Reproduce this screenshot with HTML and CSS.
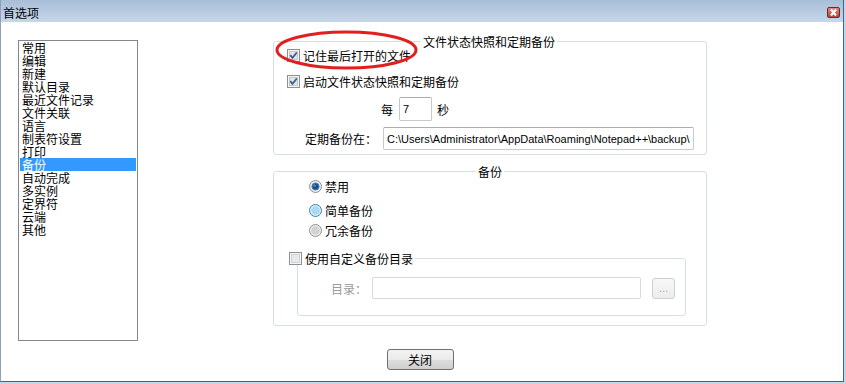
FILE: index.html
```html
<!DOCTYPE html>
<html lang="zh-CN">
<head>
    <meta charset="UTF-8">
    <title>首选项</title>
    <link rel="stylesheet" href="styles.css">
</head>
<body>
    <div class="window">
        <div class="titlebar">
            <span class="title">首选项</span>
            <span class="close-btn">
                <svg width="11" height="9" viewBox="0 0 11 9"><path d="M3 1.5 L8 7.5 M8 1.5 L3 7.5" stroke="#fff" stroke-width="2" fill="none"/></svg>
            </span>
        </div>
        <div class="client">
            <div class="content">
                <ul class="pref-list">
                    <li>常用</li>
                    <li>编辑</li>
                    <li>新建</li>
                    <li>默认目录</li>
                    <li>最近文件记录</li>
                    <li>文件关联</li>
                    <li>语言</li>
                    <li>制表符设置</li>
                    <li>打印</li>
                    <li class="selected">备份</li>
                    <li>自动完成</li>
                    <li>多实例</li>
                    <li>定界符</li>
                    <li>云端</li>
                    <li>其他</li>
                </ul>
                <div class="panels">
                    <fieldset class="group snapshot">
                        <legend>文件状态快照和定期备份</legend>
                        <label class="check-row first">
                            <svg class="box" width="13" height="13" viewBox="0 0 13 13"><rect x="0.5" y="0.5" width="12" height="12" fill="#f6f6f6" stroke="#8e8f8f"/><rect x="2.5" y="2.5" width="8" height="8" fill="#e2e6eb" stroke="#c3c7cc"/><path d="M3.3 6.2 L5.5 8.8 L9.8 3.5" fill="none" stroke="#3f5a8e" stroke-width="1.8"/></svg>
                            <span>记住最后打开的文件</span>
                        </label>
                        <label class="check-row second">
                            <svg class="box" width="13" height="13" viewBox="0 0 13 13"><rect x="0.5" y="0.5" width="12" height="12" fill="#f6f6f6" stroke="#8e8f8f"/><rect x="2.5" y="2.5" width="8" height="8" fill="#e2e6eb" stroke="#c3c7cc"/><path d="M3.3 6.2 L5.5 8.8 L9.8 3.5" fill="none" stroke="#3f5a8e" stroke-width="1.8"/></svg>
                            <span>启动文件状态快照和定期备份</span>
                        </label>
                        <div class="interval-row">
                            <span>每</span>
                            <input class="textbox interval" type="text" value="7">
                            <span>秒</span>
                        </div>
                        <div class="path-row">
                            <span class="path-label">定期备份在：</span>
                            <input class="textbox path" type="text" value="C:\Users\Administrator\AppData\Roaming\Notepad++\backup\">
                        </div>
                    </fieldset>

                    <fieldset class="group backup">
                        <legend>备份</legend>
                        <label class="radio-row r1">
                            <svg width="13" height="13" viewBox="0 0 13 13"><circle cx="6.5" cy="6.5" r="6" fill="#eceef0" stroke="#8e8f8f"/><circle cx="6.5" cy="6.5" r="3.6" fill="#1d4f86" stroke="#4f86bd" stroke-width="1"/><circle cx="5.6" cy="5.5" r="1.2" fill="#5d8fc4"/></svg>
                            <span>禁用</span>
                        </label>
                        <label class="radio-row r2">
                            <svg width="13" height="13" viewBox="0 0 13 13"><circle cx="6.5" cy="6.5" r="6" fill="#d9f0fc" stroke="#3c7fb1"/><circle cx="6.5" cy="6.5" r="4.3" fill="#a9d9f4"/></svg>
                            <span>简单备份</span>
                        </label>
                        <label class="radio-row r3">
                            <svg width="13" height="13" viewBox="0 0 13 13"><circle cx="6.5" cy="6.5" r="6" fill="#eeeeee" stroke="#8e8f8f"/><circle cx="6.5" cy="6.5" r="4.3" fill="#d2d2d2"/></svg>
                            <span>冗余备份</span>
                        </label>
                        <fieldset class="custom-dir">
                            <legend>
                                <label class="check-row">
                                    <svg class="box" width="13" height="13" viewBox="0 0 13 13"><rect x="0.5" y="0.5" width="12" height="12" fill="#f6f6f6" stroke="#8e8f8f"/><rect x="2.5" y="2.5" width="8" height="8" fill="#e6e8eb" stroke="#d0d3d6"/></svg>
                                    <span>使用自定义备份目录</span>
                                </label>
                            </legend>
                            <div class="dir-row">
                                <span class="dir-label">目录：</span>
                                <input class="textbox dir" type="text" value="" disabled>
                                <span class="browse-btn">…</span>
                            </div>
                        </fieldset>
                    </fieldset>
                </div>
            </div>
            <div class="footer">
                <button type="button" class="close-button">关闭</button>
            </div>
        </div>
        <svg class="annotation" width="146" height="41" viewBox="0 0 146 41">
            <ellipse cx="72.5" cy="20" rx="69.5" ry="18" fill="none" stroke="#e11f1f" stroke-width="3"/>
        </svg>
    </div>
</body>
</html>
```

FILE: styles.css
```css
* {
    box-sizing: border-box;
}
html, body {
    margin: 0;
}
body {
    width: 846px;
    height: 384px;
    overflow: hidden;
    background: #c2d6ec;
    font-family: "Noto Sans CJK SC", "Liberation Sans", sans-serif;
    font-size: 12px;
    line-height: 13px;
    color: #000;
}
.window {
    position: relative;
    width: 844px;
    height: 382px;
    display: flex;
    flex-direction: column;
    background: #fff;
    border-left: 1px solid #8fa1b8;
    border-right: 1px solid #3b6a86;
    border-bottom: 1px solid #3b6a86;
}
.titlebar {
    height: 22px;
    flex: none;
    display: flex;
    align-items: flex-start;
    justify-content: space-between;
    padding: 3px 3px 0 2px;
    background: linear-gradient(#a8bdd7, #c7d7ea);
}
.title {
    line-height: 19px;
}
.close-btn {
    margin-top: 4px;
    width: 13px;
    height: 11px;
    display: flex;
    align-items: center;
    justify-content: center;
    border: 1px solid #6d2a24;
    border-radius: 2px;
    background: linear-gradient(#dc8d84, #b5473d);
}
.client {
    flex: 1;
    display: flex;
    flex-direction: column;
}
.content {
    display: flex;
    align-items: flex-start;
    padding-left: 17px;
}
.pref-list {
    margin: 18px 0 0;
    padding: 0 1px;
    width: 120px;
    height: 301px;
    border: 1px solid #828790;
    list-style: none;
}
.pref-list li {
    height: 13px;
    padding-left: 2px;
    white-space: nowrap;
}
.pref-list li.selected {
    background: #3399ff;
    color: #fff;
}
.panels {
    margin: 13px 0 0 135px;
    display: flex;
    flex-direction: column;
}
.group {
    margin: 0;
    padding: 0 0 0 13px;
    width: 434px;
    min-width: 0;
    border: 1px solid #d5dfe5;
    border-radius: 3px;
}
.group legend {
    padding: 0 2px;
    line-height: 13px;
}
.snapshot {
    height: 120px;
}
.snapshot legend {
    margin-left: 134px;
}
.backup {
    margin-top: 10px;
    height: 161px;
}
.backup > legend {
    margin-left: 189px;
}
.check-row, .radio-row {
    display: flex;
    align-items: center;
    height: 13px;
    white-space: nowrap;
}
.check-row {
    gap: 3px;
}
.check-row.first {
    margin-top: 1px;
}
.check-row.second {
    margin-top: 13px;
}
.interval-row {
    display: flex;
    align-items: center;
    height: 24px;
    margin: 9px 0 0 94px;
}
.textbox {
    font-family: "Liberation Sans", sans-serif;
    font-size: 11px;
    color: #000;
    padding: 0 3px;
    border: 1px solid #c5c9cf;
    border-top-color: #abadb3;
    border-radius: 2px;
    background: #fff;
    outline: none;
}
.interval {
    width: 33px;
    height: 24px;
    margin: 0 5px 0 6px;
}
.path-row {
    display: flex;
    align-items: center;
    height: 23px;
    margin: 6px 0 0 18px;
}
.path-label {
    width: 72px;
}
.path {
    width: 311px;
    height: 23px;
    margin-left: 6px;
}
.radio-row {
    gap: 3px;
    margin-left: 22px;
}
.radio-row.r1 {
    margin-top: 2px;
}
.radio-row.r2 {
    margin-top: 11px;
}
.radio-row.r3 {
    margin-top: 7px;
}
.custom-dir {
    margin: 15px 0 0 10px;
    padding: 0;
    width: 389px;
    height: 64px;
    min-width: 0;
    border: 1px solid #d5dfe5;
    border-radius: 3px;
}
.custom-dir legend {
    margin-left: -9px;
    padding: 0 2px 0 0;
    line-height: 13px;
}
.dir-row {
    display: flex;
    align-items: center;
    height: 22px;
    margin: 12px 0 0 33px;
}
.dir-label {
    width: 36px;
    margin-right: 5px;
    color: #9a9a9a;
}
.dir {
    width: 269px;
    height: 22px;
    border-color: #d6d9de;
}
.browse-btn {
    margin-left: 11px;
    width: 23px;
    height: 21px;
    display: flex;
    align-items: center;
    justify-content: center;
    border: 1px solid #cdd0d4;
    border-radius: 3px;
    background: linear-gradient(#f8f8f8, #ededed);
    color: #a0a0a0;
    font-family: "Liberation Sans", sans-serif;
    font-size: 10px;
}
.footer {
    display: flex;
    justify-content: center;
    margin-top: 8px;
    padding-right: 4px;
}
.close-button {
    width: 67px;
    height: 21px;
    padding: 0;
    font-family: "Noto Sans CJK SC", sans-serif;
    font-size: 12px;
    line-height: 13px;
    color: #000;
    border: 1px solid #707070;
    border-radius: 3px;
    background: linear-gradient(#f2f2f2 0%, #ebebeb 50%, #dddddd 51%, #cfcfcf 100%);
}
.annotation {
    position: absolute;
    left: 273px;
    top: 30px;
}
```
